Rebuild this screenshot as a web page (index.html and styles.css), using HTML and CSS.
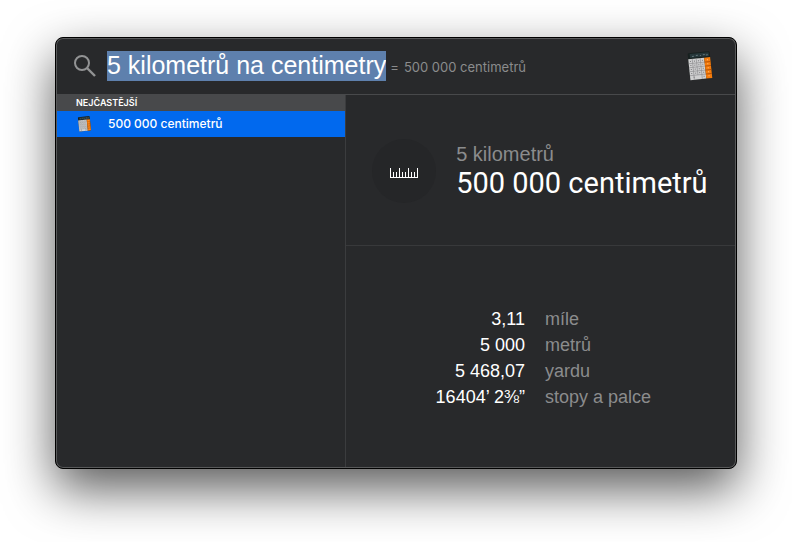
FILE: index.html
```
<!DOCTYPE html>
<html lang="cs">
<head>
    <meta charset="UTF-8">
    <meta name="viewport" content="width=device-width, initial-scale=1.0">
    <title>Spotlight</title>
    <link rel="stylesheet" href="styles.css">
</head>
<body>
    <!-- Calculator icon, shared by the search bar and the result row -->
    <svg class="sprite" aria-hidden="true">
        <symbol id="calculator" viewBox="0 0 28 30">
            <g transform="rotate(-6 14 15)">
                <rect x="2" y="1" width="22" height="27" rx="1" fill="#17201f"/>
                <rect x="4" y="2" width="19" height="4" fill="#26363a"/>
                <path d="M6 4.500h2M10 4h2M14 4.500h1M17 4h2M20 4.500h2" stroke="#5f7376"/>
                <rect x="2" y="7" width="16" height="21" fill="#cfcfd0"/>
                <rect x="18" y="7" width="6" height="21" fill="#f57c0c"/>
                <path d="M2 11.500h16M2 15.500h16M2 19.500h16M2 23.500h16M6 7v21M10 7v16.500M14 7v21" stroke="#929294" stroke-width=".7"/>
                <path d="M18 11.500h6M18 15.500h6M18 19.500h6M18 23.500h6" stroke="#ad4d05" stroke-width=".8"/>
                <path d="M3.500 9.500h1M7.500 9.500h1M11.500 9.500h1M15.500 9.500h1M3.500 13.500h1M7.500 13.500h1M11.500 13.500h1M15.500 13.500h1M3.500 17.500h1M7.500 17.500h1M11.500 17.500h1M15.500 17.500h1M3.500 21.500h1M7.500 21.500h1M11.500 21.500h1M15.500 21.500h1M5.500 25.500h1M15.500 25.500h1" stroke="#77777a"/>
                <path d="M20.500 9.500h1M20.500 13.500h1M20.500 17.500h1M20.500 21.500h1M20.500 25.500h1" stroke="#ffc188"/>
            </g>
        </symbol>
    </svg>

    <main class="spotlight">
        <form class="search">
            <svg class="search-icon" viewBox="0 0 24 24" aria-hidden="true">
                <circle cx="9" cy="9" r="7" fill="none" stroke="#929394" stroke-width="2"/>
                <path d="M14 14l8 8" stroke="#929394" stroke-width="2.400"/>
            </svg>
            <input type="text" class="search-input" value="5 kilometrů na centimetry" aria-label="Hledat" spellcheck="false">
            <output class="search-result"><span>=</span><span>500 000 centimetrů</span></output>
            <svg class="search-app" aria-hidden="true"><use href="#calculator"/></svg>
        </form>

        <div class="content">
            <nav class="sidebar">
                <h2>NEJČASTĚJŠÍ</h2>
                <a href="#preview" class="result">
                    <svg class="result-icon" aria-hidden="true"><use href="#calculator"/></svg>
                    500 000 centimetrů
                </a>
            </nav>

            <section class="preview" id="preview">
                <div class="summary">
                    <div class="unit-icon">
                        <svg viewBox="0 0 28 10" aria-hidden="true">
                            <path d="M0 9.500h28M.5 0v10M3.500 4v6M6.500 4v6M9.500 0v10M12.500 4v6M15.500 4v6M18.500 0v10M21.500 4v6M24.500 4v6M27.500 0v10" stroke="#fff" fill="none"/>
                        </svg>
                    </div>
                    <div>
                        <p class="from">5 kilometrů</p>
                        <h1>500 000 centimetrů</h1>
                    </div>
                </div>
                <table class="conversions">
                    <tr><td>3,11</td><th scope="row">míle</th></tr>
                    <tr><td>5 000</td><th scope="row">metrů</th></tr>
                    <tr><td>5 468,07</td><th scope="row">yardu</th></tr>
                    <tr><td>16404’ 2⅜”</td><th scope="row">stopy a palce</th></tr>
                </table>
            </section>
        </div>
    </main>
</body>
</html>
```
FILE: styles.css
```
* {
    box-sizing: border-box;
}

body, h1, h2, p {
    margin: 0;
}

body {
    background: #fff;
    color: #fff;
    font-family: Inter, sans-serif;
    padding: 37px 55px 73px;
}

.sprite {
    position: absolute;
    width: 0;
    height: 0;
}

.spotlight {
    background: #28292b;
    border: 1px solid #000;
    border-radius: 8px;
    box-shadow: inset 0 0 0 1px #58595a, 0 20px 50px rgba(0, 0, 0, 0.65);
    padding: 1px;
}

.search {
    display: flex;
    align-items: center;
    height: 56px;
    padding: 0 20px 2px 16px;
    border-bottom: 1px solid #48494b;
}

.search-icon {
    width: 24px;
    height: 24px;
    margin-right: 10px;
    flex: none;
}

.search-input {
    field-sizing: content;
    height: 30px;
    padding: 0;
    border: 0;
    outline: 0;
    background: #5e80ad;
    color: #fff;
    font: 25px "Liberation Sans", Arial, sans-serif;
}

.search-result {
    display: flex;
    gap: 5px;
    margin-left: 4px;
    padding-top: 2px;
    color: #8b8c8d;
    font-size: 13px;
    white-space: nowrap;
}

.search-app {
    width: 28px;
    height: 30px;
    margin-left: auto;
    flex: none;
}

.content {
    display: flex;
}

.sidebar {
    flex: 289 1 0;
    min-width: 0;
}

.sidebar h2 {
    background: #48494b;
    padding-left: 19px;
    font-size: 9px;
    font-weight: 600;
    line-height: 16px;
}

.result {
    display: flex;
    align-items: center;
    height: 26px;
    padding: 0 0 1px 20px;
    background: #0169ee;
    color: #fff;
    font-size: 12px;
    font-weight: 500;
    text-decoration: none;
}

.result-icon {
    width: 16px;
    height: 16px;
    margin-right: 15px;
}

.preview {
    flex: 390 1 0;
    min-width: 0;
    border-left: 1px solid #3b3c3e;
    font-family: "Liberation Sans", Arial, sans-serif;
}

.summary {
    display: flex;
    align-items: center;
    gap: 20px;
    padding: 44px 26px 42px;
    border-bottom: 1px solid #38393b;
}

.unit-icon {
    display: flex;
    align-items: center;
    justify-content: center;
    width: 64px;
    height: 64px;
    padding-top: 4px;
    border-radius: 50%;
    background: #252628;
    flex: none;
}

.unit-icon svg {
    width: 28px;
    height: 10px;
}

.from {
    color: #8b8c8d;
    font-size: 20px;
    line-height: 24px;
}

h1 {
    font: 400 29px/34px Roboto, sans-serif;
    white-space: nowrap;
}

.conversions {
    width: 100%;
    margin: 60px 0 57px;
    border-collapse: collapse;
    table-layout: fixed;
    font-size: 18px;
    line-height: 26px;
}

.conversions td {
    width: 46%;
    padding: 0;
    text-align: right;
}

.conversions th {
    padding: 0 0 0 20px;
    color: #8b8c8d;
    font-weight: 400;
    text-align: left;
}
```
